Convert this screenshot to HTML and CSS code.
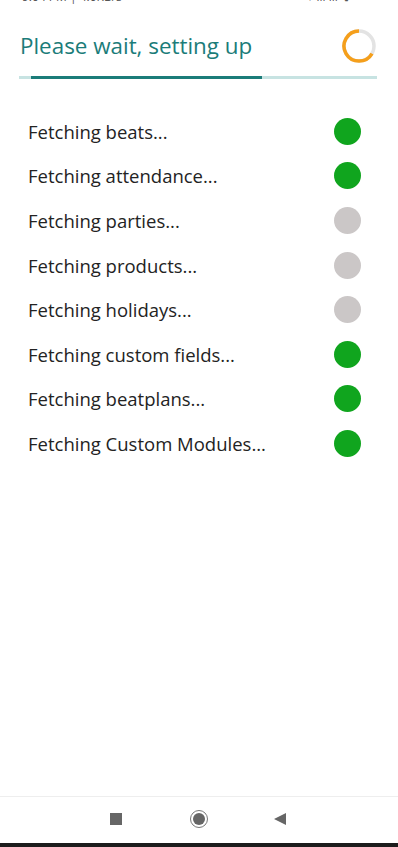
FILE: index.html
```html
<!DOCTYPE html>
<html>
<head>
<meta charset="utf-8">
<link rel="stylesheet" href="styles.css">
</head>
<body>
<div class="screen">
  <div class="status"><span class="status-left">9:04 PM | 4.0KB/s</span><span class="status-right">▾ ıll ıll ᯤ ▭</span></div>
  <div class="header">
    <h1 class="title">Please wait, setting up</h1>
    <svg class="spinner" width="36" height="36" viewBox="0 0 36 36">
      <circle cx="18" cy="18" r="15" fill="none" stroke="#e3e3e3" stroke-width="3.5"/>
      <path d="M18 3 A15 15 0 1 0 31 25.5" fill="none" stroke="#f59f1b" stroke-width="3.5"/>
    </svg>
  </div>
  <div class="progress"><div class="progress-fill"></div></div>
  <ul class="list">
    <li class="row"><span class="label">Fetching beats...</span><span class="dot done"></span></li>
    <li class="row"><span class="label">Fetching attendance...</span><span class="dot done"></span></li>
    <li class="row"><span class="label">Fetching parties...</span><span class="dot pending"></span></li>
    <li class="row"><span class="label">Fetching products...</span><span class="dot pending"></span></li>
    <li class="row"><span class="label">Fetching holidays...</span><span class="dot pending"></span></li>
    <li class="row"><span class="label">Fetching custom fields...</span><span class="dot done"></span></li>
    <li class="row"><span class="label">Fetching beatplans...</span><span class="dot done"></span></li>
    <li class="row"><span class="label">Fetching Custom Modules...</span><span class="dot done"></span></li>
  </ul>
  <div class="spacer"></div>
  <div class="navbar">
    <span class="nav-square"></span>
    <span class="nav-home"><span class="nav-home-inner"></span></span>
    <span class="nav-back"></span>
  </div>
  <div class="gesture"></div>
</div>
</body>
</html>
```
FILE: styles.css
```css
* { box-sizing: border-box; }
html, body { margin: 0; padding: 0; background: #fff; }
body { font-family: "Open Sans", "Noto Sans", sans-serif; }
.screen {
  width: 398px;
  height: 847px;
  display: flex;
  flex-direction: column;
  overflow: hidden;
}
.status {
  height: 4px;
  overflow: hidden;
  display: flex;
  justify-content: space-between;
  padding: 0 32px 0 22px;
  font-size: 12px;
  color: #555;
  line-height: 12px;
}
.status-left, .status-right { margin-top: -9px; }
.header {
  display: flex;
  align-items: center;
  justify-content: space-between;
  padding: 23px 21px 0 20px;
  height: 60px;
}
.title {
  margin: 0;
  font-size: 22.4px;
  font-weight: 500;
  color: #1b7c79;
  line-height: 30px;
}
.spinner { display: block; }
.progress {
  margin: 12px 21px 0 19px;
  height: 3px;
  background: #c7e3e2;
  padding-left: 12px;
}
.progress-fill {
  width: 231px;
  height: 3px;
  background: #1b7c79;
}
.list {
  list-style: none;
  margin: 30px 0 0;
  padding: 0 37px 0 28px;
}
.row {
  height: 44.6px;
  display: flex;
  align-items: center;
  justify-content: space-between;
}
.label {
  font-size: 18.5px;
  color: #232323;
}
.dot {
  width: 27px;
  height: 27px;
  border-radius: 50%;
}
.dot.done { background: #10a51e; }
.dot.pending { background: #cbc7c7; }
.spacer { flex: 1; }
.navbar {
  height: 47px;
  border-top: 1px solid #eeeeee;
  display: flex;
  align-items: center;
  justify-content: flex-start;
  padding: 0 0 2px 110px;
}
.nav-square {
  width: 12px;
  height: 12px;
  background: #666;
}
.nav-home {
  width: 18px;
  height: 18px;
  border-radius: 50%;
  border: 1.5px solid #777;
  display: flex;
  align-items: center;
  justify-content: center;
  margin-left: 68px;
}
.nav-home-inner {
  width: 12px;
  height: 12px;
  border-radius: 50%;
  background: #666;
}
.nav-back {
  width: 0;
  height: 0;
  border-top: 6.5px solid transparent;
  border-bottom: 6.5px solid transparent;
  border-right: 12px solid #666;
  margin-left: 66px;
}
.gesture {
  height: 4px;
  background: #1c1c1c;
}
```
